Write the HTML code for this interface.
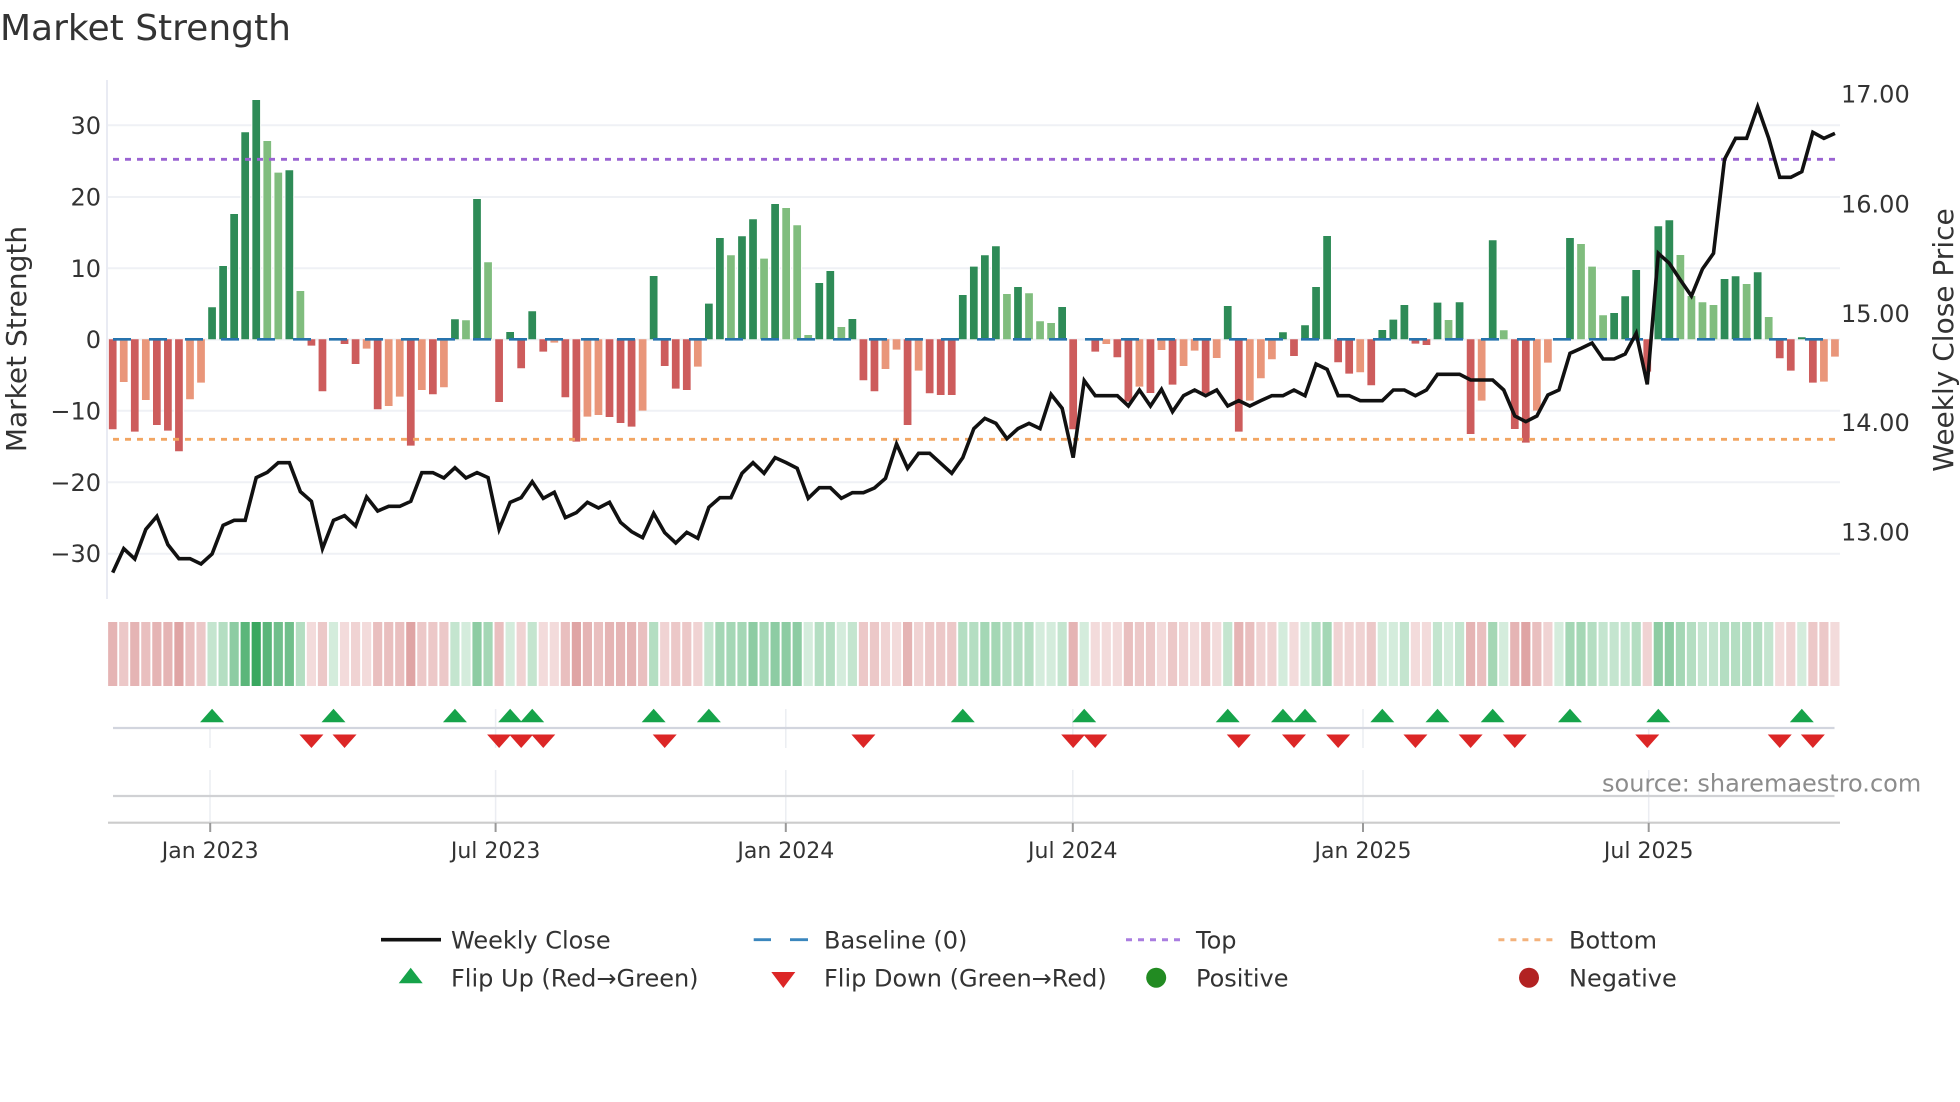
<!DOCTYPE html>
<html lang="en">
<head>
<meta charset="utf-8">
<title>Market Strength</title>
<style>
html,body{margin:0;padding:0;background:#fff;width:1960px;height:1102px;overflow:hidden}
svg{display:block}
text{font-family:"DejaVu Sans","Liberation Sans",sans-serif;fill:#333}
</style>
</head>
<body>
<svg width="1960" height="1102" viewBox="0 0 1960 1102" xmlns="http://www.w3.org/2000/svg">
<rect width="1960" height="1102" fill="#fff"/>
<text x="0" y="40" font-size="36">Market Strength</text>

<!-- axis and grid -->
<path d="M107 80V599" stroke="#e9ebf3" stroke-width="2" fill="none"/>
<path d="M108 125.3H1840M108 197H1840M108 268.3H1840M108 339.5H1840M108 410.7H1840M108 482.2H1840M108 553.8H1840" stroke="#eff1f5" stroke-width="2" fill="none"/>

<!-- bars -->
<g transform="translate(112.7 339.3) scale(11.04 .33333)" fill="none">
<path stroke="#fff" stroke-width=".88" d="M9 0V-96M10 0V-220M11 0V-376M12 0V-621M13 0V-718M14 0V-595M15 0V-500M16 0V-507M17 0V-145M33 0V-421M34 0V-231M55 0V-304M56 0V-252M57 0V-309M58 0V-360M59 0V-242M60 0V-406M61 0V-394M62 0V-342M79 0V-252M80 0V-279M110 0V-310M125 0V-297M132 0V-304M133 0V-286M134 0V-218M140 0V-339M141 0V-357M142 0V-253M6 0V336M27 0V319M42 0V307M128 0V310M43 0V232M44 0V227M45 0V233M46 0V251M47 0V262M0 0V270M87 0V270M102 0V277M123 0V284M127 0V269"/>
<path stroke="#2e8b57" stroke-width=".7" d="M9 0V-96M10 0V-220M11 0V-376M12 0V-621M13 0V-718M16 0V-507M31 0V-60M33 0V-421M36 0V-22M38 0V-84M49 0V-190M54 0V-107M55 0V-304M57 0V-309M58 0V-360M60 0V-406M64 0V-169M65 0V-205M67 0V-61M77 0V-133M78 0V-218M79 0V-252M80 0V-279M82 0V-157M86 0V-97M101 0V-100M106 0V-21M108 0V-42M109 0V-157M110 0V-310M115 0V-28M116 0V-59M117 0V-103M120 0V-110M122 0V-111M125 0V-297M132 0V-304M136 0V-79M137 0V-129M138 0V-208M140 0V-339M141 0V-357M146 0V-181M147 0V-189M149 0V-201M153 0V-6"/>
<path stroke="#80bd7e" stroke-width=".7" d="M14 0V-595M15 0V-500M17 0V-145M32 0V-57M34 0V-231M56 0V-252M59 0V-242M61 0V-394M62 0V-342M63 0V-13M66 0V-37M81 0V-136M83 0V-138M84 0V-54M85 0V-49M121 0V-58M126 0V-27M133 0V-286M134 0V-218M135 0V-72M142 0V-253M143 0V-130M144 0V-111M145 0V-103M148 0V-166M150 0V-67"/>
<path stroke="#cd5c5c" stroke-width=".7" d="M0 0V270M2 0V277M4 0V257M5 0V274M6 0V336M18 0V19M19 0V156M21 0V14M22 0V74M24 0V210M27 0V319M29 0V165M35 0V188M37 0V87M39 0V37M41 0V174M42 0V307M45 0V233M46 0V251M47 0V262M50 0V80M51 0V148M52 0V152M68 0V123M69 0V156M72 0V257M74 0V162M75 0V167M76 0V167M87 0V270M89 0V37M91 0V54M92 0V187M94 0V161M96 0V136M99 0V162M102 0V277M107 0V50M111 0V69M112 0V103M114 0V138M118 0V13M119 0V17M123 0V284M127 0V269M128 0V310M139 0V97M151 0V57M152 0V94M154 0V130"/>
<path stroke="#e9967a" stroke-width=".7" d="M1 0V128M3 0V182M7 0V180M8 0V130M23 0V28M25 0V200M26 0V172M28 0V152M30 0V144M40 0V10M43 0V232M44 0V227M48 0V214M53 0V82M70 0V89M71 0V31M73 0V94M90 0V14M93 0V142M95 0V32M97 0V80M98 0V34M100 0V56M103 0V184M104 0V117M105 0V60M113 0V99M124 0V184M129 0V214M130 0V70M155 0V127M156 0V52"/>
</g>

<!-- reference lines -->
<path d="M113 339.3H1835" stroke="#2673ad" stroke-width="2.7" stroke-dasharray="18 18" fill="none"/>
<path d="M113 159.3H1835" stroke="#9a63d2" stroke-width="2.8" stroke-dasharray="6 6" fill="none"/>
<path d="M113 439.3H1835" stroke="#f2a562" stroke-width="2.8" stroke-dasharray="6 6" fill="none"/>

<!-- weekly close line -->
<g transform="translate(112.7 160) scale(11.04 .33333)">
<polyline fill="none" stroke="#111" stroke-width="3.6" stroke-linejoin="miter" vector-effect="non-scaling-stroke" points="0,1238 1,1166 2,1197 3,1108 4,1069 5,1154 6,1196 7,1196 8,1212 9,1182 10,1096 11,1081 12,1081 13,953 14,937 15,908 16,908 17,995 18,1024 19,1166 20,1081 21,1067 22,1098 23,1011 24,1053 25,1039 26,1039 27,1024 28,938 29,938 30,954 31,923 32,954 33,938 34,953 35,1108 36,1027 37,1013 38,965 39,1015 40,997 41,1073 42,1058 43,1027 44,1044 45,1027 46,1087 47,1115 48,1133 49,1060 50,1118 51,1149 52,1117 53,1135 54,1042 55,1013 56,1013 57,940 58,908 59,940 60,893 61,908 62,925 63,1015 64,983 65,983 66,1015 67,998 68,998 69,984 70,955 71,852 72,925 73,880 74,880 75,910 76,940 77,893 78,806 79,775 80,790 81,836 82,806 83,790 84,806 85,703 86,745 87,893 88,662 89,707 90,707 91,707 92,738 93,690 94,738 95,688 96,755 97,707 98,690 99,707 100,690 101,738 102,722 103,738 104,722 105,707 106,707 107,690 108,707 109,612 110,628 111,707 112,707 113,722 114,722 115,722 116,690 117,690 118,707 119,690 120,643 121,643 122,643 123,660 124,660 125,660 126,690 127,768 128,785 129,768 130,705 131,690 132,580 133,565 134,549 135,597 136,597 137,582 138,520 139,673 140,280 141,310 142,360 143,408 144,327 145,280 146,-2 147,-65 148,-65 149,-160 150,-65 151,52 152,52 153,35 154,-83 155,-65 156,-80"/>
</g>

<!-- y tick labels -->
<g font-size="24" text-anchor="end">
<text x="101" y="134">30</text>
<text x="101" y="205.7">20</text>
<text x="101" y="277">10</text>
<text x="101" y="348.2">0</text>
<text x="101" y="419.5">−10</text>
<text x="101" y="490.8">−20</text>
<text x="101" y="562">−30</text>
</g>
<g font-size="24">
<text x="1841" y="102.7">17.00</text>
<text x="1841" y="212.5">16.00</text>
<text x="1841" y="322">15.00</text>
<text x="1841" y="431">14.00</text>
<text x="1841" y="540.5">13.00</text>
</g>
<text transform="translate(26 339) rotate(-90)" font-size="28" text-anchor="middle">Market Strength</text>
<text transform="translate(1953 340) rotate(-90)" font-size="28" text-anchor="middle">Weekly Close Price</text>

<!-- strength strip -->
<g transform="translate(112.7 622) scale(11.04 1)" fill="none" stroke-width=".83">
<g stroke="#1c9a47">
<path stroke-opacity=".19" d="M20 0v64M32 0v64M36 0v64M63 0v64M66 0v64M84 0v64M85 0v64M88 0v64M106 0v64M108 0v64M115 0v64M116 0v64M121 0v64M126 0v64M131 0v64M153 0v64"/>
<path stroke-opacity=".26" d="M9 0v64M31 0v64M38 0v64M54 0v64M67 0v64M86 0v64M101 0v64M117 0v64M120 0v64M122 0v64M135 0v64M136 0v64M137 0v64M144 0v64M145 0v64M150 0v64"/>
<path stroke-opacity=".33" d="M17 0v64M10 0v64M49 0v64M64 0v64M65 0v64M77 0v64M78 0v64M81 0v64M82 0v64M83 0v64M109 0v64M134 0v64M138 0v64M143 0v64M146 0v64M147 0v64M148 0v64M149 0v64"/>
<path stroke-opacity=".4" d="M34 0v64M55 0v64M56 0v64M57 0v64M59 0v64M79 0v64M80 0v64M110 0v64M125 0v64M132 0v64M133 0v64M142 0v64"/>
<path stroke-opacity=".5" d="M11 0v64M33 0v64M58 0v64M60 0v64M61 0v64M62 0v64M140 0v64M141 0v64"/>
<path stroke-opacity=".63" d="M15 0v64M16 0v64"/>
<path stroke-opacity=".72" d="M12 0v64M14 0v64"/>
<path stroke-opacity=".87" d="M13 0v64"/>
</g>
<g stroke="#b22222">
<path stroke-opacity=".16" d="M18 0v64M21 0v64M23 0v64M39 0v64M40 0v64M71 0v64M89 0v64M90 0v64M91 0v64M95 0v64M98 0v64M100 0v64M107 0v64M118 0v64M119 0v64M151 0v64M156 0v64"/>
<path stroke-opacity=".2" d="M22 0v64M37 0v64M50 0v64M53 0v64M70 0v64M73 0v64M97 0v64M105 0v64M104 0v64M112 0v64M111 0v64M113 0v64M130 0v64M139 0v64M152 0v64"/>
<path stroke-opacity=".25" d="M1 0v64M8 0v64M19 0v64M28 0v64M29 0v64M30 0v64M51 0v64M52 0v64M68 0v64M69 0v64M74 0v64M75 0v64M76 0v64M93 0v64M94 0v64M96 0v64M99 0v64M114 0v64M154 0v64M155 0v64"/>
<path stroke-opacity=".29" d="M3 0v64M7 0v64M24 0v64M25 0v64M26 0v64M35 0v64M41 0v64M44 0v64M48 0v64M92 0v64M103 0v64M124 0v64M129 0v64"/>
<path stroke-opacity=".34" d="M0 0v64M2 0v64M4 0v64M5 0v64M43 0v64M45 0v64M46 0v64M47 0v64M72 0v64M87 0v64M102 0v64M123 0v64M127 0v64"/>
<path stroke-opacity=".41" d="M6 0v64M27 0v64M42 0v64M128 0v64"/>
</g>
</g>

<!-- flip panel -->
<path d="M210 728V748M210 770V823M495.6 709V748M495.6 770V823M785.8 709V748M785.8 770V823M1072.8 709V748M1072.8 770V823M1363 709V748M1363 770V823M1648.7 728V748M1648.7 770V823" stroke="#ebedf2" stroke-width="1.5" fill="none"/>
<path d="M113 728H1834.5" stroke="#d2d5de" stroke-width="2.2" fill="none"/>
<path d="M113 796H1834.5" stroke="#d0d1d4" stroke-width="2.2" fill="none"/>
<path d="M108 822.7H1840" stroke="#cccccc" stroke-width="2.2" fill="none"/>
<path d="M210.2 823V832M495.6 823V832M785.8 823V832M1072.8 823V832M1363 823V832M1648.7 823V832" stroke="#999" stroke-width="2" fill="none"/>
<g transform="translate(112.7 0) scale(11.04 1)">
<path fill="#16a34a" d="M9 708.7l1.087 13.5h-2.174zM20 708.7l1.087 13.5h-2.174zM31 708.7l1.087 13.5h-2.174zM36 708.7l1.087 13.5h-2.174zM38 708.7l1.087 13.5h-2.174zM49 708.7l1.087 13.5h-2.174zM54 708.7l1.087 13.5h-2.174zM77 708.7l1.087 13.5h-2.174zM88 708.7l1.087 13.5h-2.174zM101 708.7l1.087 13.5h-2.174zM106 708.7l1.087 13.5h-2.174zM108 708.7l1.087 13.5h-2.174zM115 708.7l1.087 13.5h-2.174zM120 708.7l1.087 13.5h-2.174zM125 708.7l1.087 13.5h-2.174zM132 708.7l1.087 13.5h-2.174zM140 708.7l1.087 13.5h-2.174zM153 708.7l1.087 13.5h-2.174z"/>
<path fill="#dc2626" d="M18 748l1.087 -13.5h-2.174zM21 748l1.087 -13.5h-2.174zM35 748l1.087 -13.5h-2.174zM37 748l1.087 -13.5h-2.174zM39 748l1.087 -13.5h-2.174zM50 748l1.087 -13.5h-2.174zM68 748l1.087 -13.5h-2.174zM87 748l1.087 -13.5h-2.174zM89 748l1.087 -13.5h-2.174zM102 748l1.087 -13.5h-2.174zM107 748l1.087 -13.5h-2.174zM111 748l1.087 -13.5h-2.174zM118 748l1.087 -13.5h-2.174zM123 748l1.087 -13.5h-2.174zM127 748l1.087 -13.5h-2.174zM139 748l1.087 -13.5h-2.174zM151 748l1.087 -13.5h-2.174zM154 748l1.087 -13.5h-2.174z"/>
</g>
<text x="1602" y="791.5" font-size="24" style="fill:#8c8c8c">source: sharemaestro.com</text>

<!-- x tick labels -->
<g font-size="22" text-anchor="middle">
<text x="210.2" y="858">Jan 2023</text>
<text x="495.6" y="858">Jul 2023</text>
<text x="785.8" y="858">Jan 2024</text>
<text x="1072.8" y="858">Jul 2024</text>
<text x="1363" y="858">Jan 2025</text>
<text x="1648.7" y="858">Jul 2025</text>
</g>

<!-- legend -->
<g font-size="24">
<path d="M381 939.7H441" stroke="#111" stroke-width="3.6" fill="none"/>
<text x="451" y="948.3">Weekly Close</text>
<path d="M753.7 939.7H771M790 939.7H808" stroke="#3a86bd" stroke-width="2.8" fill="none"/>
<text x="824" y="948.3">Baseline (0)</text>
<path d="M1126 939.7H1182" stroke="#a97de0" stroke-width="3" stroke-dasharray="6 6" fill="none"/>
<text x="1196" y="948.3">Top</text>
<path d="M1498.4 939.7H1555" stroke="#f3b27c" stroke-width="3" stroke-dasharray="6 6" fill="none"/>
<text x="1569" y="948.3">Bottom</text>
<path fill="#16a34a" d="M410.7 967.7l12 15.5h-24z"/>
<text x="451" y="986.3">Flip Up (Red→Green)</text>
<path fill="#dc2626" d="M783.3 988l-12 -16h24z"/>
<text x="824" y="986.3">Flip Down (Green→Red)</text>
<ellipse cx="1156.2" cy="977.7" rx="10" ry="10" fill="#228b22"/>
<text x="1196" y="986.3">Positive</text>
<ellipse cx="1529" cy="977.7" rx="10" ry="10" fill="#b22222"/>
<text x="1569" y="986.3">Negative</text>
</g>
</svg>
</body>
</html>
